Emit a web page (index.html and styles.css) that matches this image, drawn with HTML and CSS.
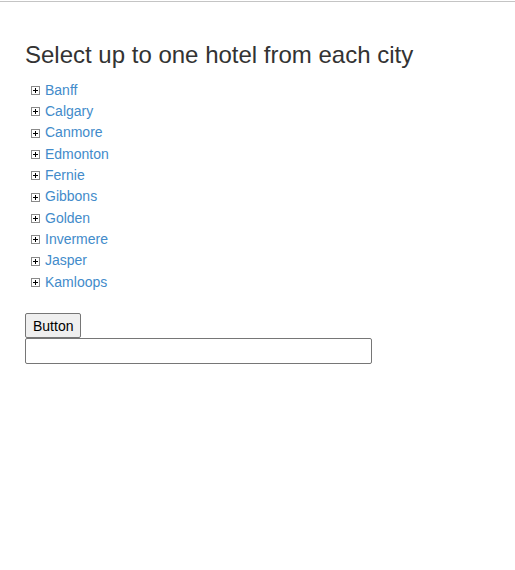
FILE: index.html
```html
<!DOCTYPE html>
<html>
<head>
<meta charset="utf-8">
<link rel="stylesheet" href="styles.css">
</head>
<body>
<div class="topbar"></div>
<main class="page">
  <h3 class="title">Select up to one hotel from each city</h3>
  <ul class="tree">
    <li class="node"><span class="toggle"></span><a href="#" class="city">Banff</a></li>
    <li class="node"><span class="toggle"></span><a href="#" class="city">Calgary</a></li>
    <li class="node"><span class="toggle"></span><a href="#" class="city">Canmore</a></li>
    <li class="node"><span class="toggle"></span><a href="#" class="city">Edmonton</a></li>
    <li class="node"><span class="toggle"></span><a href="#" class="city">Fernie</a></li>
    <li class="node"><span class="toggle"></span><a href="#" class="city">Gibbons</a></li>
    <li class="node"><span class="toggle"></span><a href="#" class="city">Golden</a></li>
    <li class="node"><span class="toggle"></span><a href="#" class="city">Invermere</a></li>
    <li class="node"><span class="toggle"></span><a href="#" class="city">Jasper</a></li>
    <li class="node"><span class="toggle"></span><a href="#" class="city">Kamloops</a></li>
  </ul>
  <div class="controls">
    <button class="btn" type="button">Button</button>
    <input class="field" type="text">
  </div>
</main>
</body>
</html>
```

FILE: styles.css
```css
html, body {
  margin: 0;
  padding: 0;
  background: #fff;
}
body {
  font-family: "Liberation Sans", Arial, sans-serif;
  font-size: 14px;
  color: #333;
}
.topbar {
  height: 1px;
  margin-top: 1px;
  background: #c4c4c4;
}
.page {
  padding: 0 25px;
}
.title {
  margin: 38px 0 0 0;
  font-size: 24px;
  font-weight: normal;
  line-height: 30px;
  color: #333;
}
.tree {
  list-style: none;
  margin: 9px 0 0 0;
  padding: 0 0 0 6px;
}
.node {
  display: flex;
  align-items: center;
  height: 21.33px;
}
.toggle {
  position: relative;
  box-sizing: border-box;
  width: 9px;
  height: 9px;
  border: 1px solid #8a8a8a;
  background: #fff;
  margin-right: 5px;
  margin-top: 2px;
  flex: none;
}
.toggle::before {
  content: "";
  position: absolute;
  left: 1px;
  top: 3px;
  width: 5px;
  height: 1px;
  background: #000;
}
.toggle::after {
  content: "";
  position: absolute;
  left: 3px;
  top: 1px;
  width: 1px;
  height: 5px;
  background: #000;
}
.city {
  color: #428bca;
  text-decoration: none;
  line-height: 16px;
}
.controls {
  margin-top: 21px;
  display: flex;
  flex-direction: column;
  align-items: flex-start;
}
.btn {
  font-family: "Liberation Sans", Arial, sans-serif;
  font-size: 14px;
  color: #000;
  background: #efefef;
  border: 1px solid #767676;
  border-radius: 2px;
  height: 25px;
  padding: 1px 7px;
  margin: 0;
}
.field {
  box-sizing: border-box;
  width: 347px;
  height: 26px;
  margin: 0;
  border: 1px solid #767676;
  border-radius: 2px;
  padding: 1px 2px;
  font-family: "Liberation Sans", Arial, sans-serif;
  font-size: 13.33px;
}
```
